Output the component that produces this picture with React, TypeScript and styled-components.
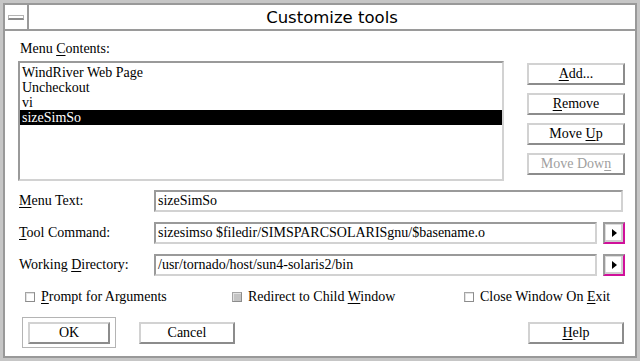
import styled, { createGlobalStyle } from 'styled-components';

// Old-school X/Motif style "Customize tools" dialog.

const SERIF = '"Liberation Serif", "Times New Roman", serif';

const GlobalStyle = createGlobalStyle`
  html, body {
    margin: 0;
    padding: 0;
    background: #c6c6c6;
  }
  body {
    font-family: ${SERIF};
    font-size: 14px;
    color: #000;
  }
`;

const Frame = styled.div`
  width: 640px;
  height: 361px;
  box-sizing: border-box;
  padding: 3px;
  background: #c6c6c6;
  font-family: ${SERIF};
`;

const Window = styled.div`
  height: 100%;
  box-sizing: border-box;
  border: 2px solid #999;
  background: #fff;
  display: flex;
  flex-direction: column;
`;

const TitleBar = styled.div`
  display: flex;
  height: 26px;
  box-sizing: border-box;
  border-bottom: 2px solid #9a9a9a;
`;

const MenuCell = styled.div`
  width: 24px;
  box-sizing: border-box;
  border-right: 2px solid #9a9a9a;
  display: flex;
  align-items: center;
  justify-content: center;
`;

const MenuGlyph = styled.span`
  width: 16px;
  height: 5px;
  box-sizing: border-box;
  border: 1px solid #b4b4b4;
  border-bottom: 2px solid #8c8c8c;
  background: #fff;
`;

const Title = styled.div`
  flex: 1;
  display: flex;
  align-items: center;
  justify-content: center;
  font-family: "DejaVu Sans", "Liberation Sans", sans-serif;
  font-size: 16.5px;
`;

const Body = styled.div`
  flex: 1;
  display: flex;
  flex-direction: column;
  padding: 10px 10px 0 13px;
  font-family: ${SERIF};
  font-size: 14px;
`;

const Label = styled.div`
  line-height: 16px;
  padding-left: 2px;
`;

const Mn = styled.span`
  text-decoration: underline;
  text-underline-offset: 2px;
`;

const ListRow = styled.div`
  display: flex;
  gap: 23px;
  margin-top: 4px;
`;

const ListBox = styled.div`
  flex: 1;
  height: 120px;
  box-sizing: border-box;
  border: 2px solid;
  border-color: #9a9a9a #d2d2d2 #d2d2d2 #9a9a9a;
  padding-top: 2px;
`;

const ListItem = styled.div<{ $selected?: boolean }>`
  line-height: 15px;
  padding-left: 2px;
  white-space: nowrap;
  background: ${(p) => (p.$selected ? '#000' : 'transparent')};
  color: ${(p) => (p.$selected ? '#fff' : '#000')};
`;

const ButtonColumn = styled.div`
  width: 98px;
  display: flex;
  flex-direction: column;
  gap: 8px;
  padding-top: 2px;
`;

const PushButton = styled.button<{ $width?: number; $disabled?: boolean }>`
  width: ${(p) => (p.$width ? `${p.$width}px` : '100%')};
  height: 22px;
  box-sizing: border-box;
  border: 2px solid;
  border-color: #d2d2d2 #8c8c8c #8c8c8c #d2d2d2;
  background: #fff;
  padding: 0;
  font-family: ${SERIF};
  font-size: 14px;
  line-height: 18px;
  color: ${(p) => (p.$disabled ? '#a0a0a0' : '#000')};
`;

const Form = styled.div`
  display: grid;
  grid-template-columns: 136px 1fr;
  grid-auto-rows: 22px;
  row-gap: 10px;
  align-items: center;
  margin-top: 9px;
`;

const FieldLabel = styled.div`
  padding-left: 1px;
  white-space: nowrap;
`;

const FieldWrap = styled.div`
  display: flex;
  gap: 6px;
  height: 22px;
`;

const TextField = styled.div<{ $inset?: number }>`
  flex: 1;
  height: 22px;
  margin-right: ${(p) => p.$inset ?? 0}px;
  box-sizing: border-box;
  border: 2px solid;
  border-color: #9a9a9a #d2d2d2 #d2d2d2 #9a9a9a;
  padding: 0 2px;
  display: flex;
  align-items: center;
  white-space: nowrap;
  overflow: hidden;
`;

const ArrowButton = styled.div`
  width: 22px;
  height: 22px;
  box-sizing: border-box;
  border: 2px solid;
  border-color: #9c9c9c #d0109a #d0109a #9c9c9c;
  box-shadow: inset -2px -2px 0 #cfcfcf, inset 1px 1px 0 #dcdcdc;
  background: #fff;
  display: flex;
  align-items: center;
  justify-content: center;
`;

const CheckRow = styled.div`
  display: grid;
  grid-template-columns: 207px 232px auto;
  margin-top: 13px;
  padding-left: 7px;
  line-height: 16px;
`;

const CheckItem = styled.label`
  display: flex;
  align-items: center;
  gap: 6px;
  white-space: nowrap;
`;

const CheckBox = styled.span<{ $filled?: boolean }>`
  width: 10px;
  height: 10px;
  box-sizing: border-box;
  border: 1px solid;
  border-color: #a4a4a4 #8c8c8c #8c8c8c #a4a4a4;
  box-shadow: inset 1px 1px 0 #e2e2e2;
  background: ${(p) => (p.$filled ? '#c4c4c4' : '#fff')};
`;

const ButtonRow = styled.div`
  display: flex;
  align-items: flex-start;
  margin-top: 12px;
  padding-left: 4px;
`;

const FocusFrame = styled.div`
  border: 1px solid #b4b4b4;
  padding: 4px 5px 3px 5px;
`;

const RowButton = styled(PushButton)<{ $left?: string }>`
  margin-top: 5px;
  margin-left: ${(p) => p.$left ?? '0'};
  margin-right: 1px;
`;

function Arrow() {
  return (
    <ArrowButton>
      <svg width="5" height="8" viewBox="0 0 5 8">
        <polygon points="0,0 5,4 0,8" fill="#000" />
      </svg>
    </ArrowButton>
  );
}

const items = ['WindRiver Web Page', 'Uncheckout', 'vi', 'sizeSimSo'];

export default function App() {
  return (
    <>
      <GlobalStyle />
      <Frame>
        <Window>
          <TitleBar>
            <MenuCell>
              <MenuGlyph />
            </MenuCell>
            <Title>Customize tools</Title>
          </TitleBar>

          <Body>
            <Label>
              Menu <Mn>C</Mn>ontents:
            </Label>

            <ListRow>
              <ListBox>
                {items.map((it) => (
                  <ListItem key={it} $selected={it === 'sizeSimSo'}>
                    {it}
                  </ListItem>
                ))}
              </ListBox>
              <ButtonColumn>
                <PushButton>
                  <Mn>A</Mn>dd...
                </PushButton>
                <PushButton>
                  <Mn>R</Mn>emove
                </PushButton>
                <PushButton>
                  Move <Mn>U</Mn>p
                </PushButton>
                <PushButton $disabled>
                  Move Dow<Mn>n</Mn>
                </PushButton>
              </ButtonColumn>
            </ListRow>

            <Form>
              <FieldLabel>
                <Mn>M</Mn>enu Text:
              </FieldLabel>
              <FieldWrap>
                <TextField $inset={2}>sizeSimSo</TextField>
              </FieldWrap>

              <FieldLabel>
                <Mn>T</Mn>ool Command:
              </FieldLabel>
              <FieldWrap>
                <TextField>sizesimso $filedir/SIMSPARCSOLARISgnu/$basename.o</TextField>
                <Arrow />
              </FieldWrap>

              <FieldLabel>
                Working <Mn>D</Mn>irectory:
              </FieldLabel>
              <FieldWrap>
                <TextField>/usr/tornado/host/sun4-solaris2/bin</TextField>
                <Arrow />
              </FieldWrap>
            </Form>

            <CheckRow>
              <CheckItem>
                <CheckBox />
                <span>
                  <Mn>P</Mn>rompt for Arguments
                </span>
              </CheckItem>
              <CheckItem>
                <CheckBox $filled />
                <span>
                  Redirect to Child <Mn>W</Mn>indow
                </span>
              </CheckItem>
              <CheckItem>
                <CheckBox />
                <span>
                  Close Window On <Mn>E</Mn>xit
                </span>
              </CheckItem>
            </CheckRow>

            <ButtonRow>
              <FocusFrame>
                <PushButton $width={82}>OK</PushButton>
              </FocusFrame>
              <RowButton $width={96} $left="23px">
                Cancel
              </RowButton>
              <RowButton $width={96} $left="auto">
                <Mn>H</Mn>elp
              </RowButton>
            </ButtonRow>
          </Body>
        </Window>
      </Frame>
    </>
  );
}
